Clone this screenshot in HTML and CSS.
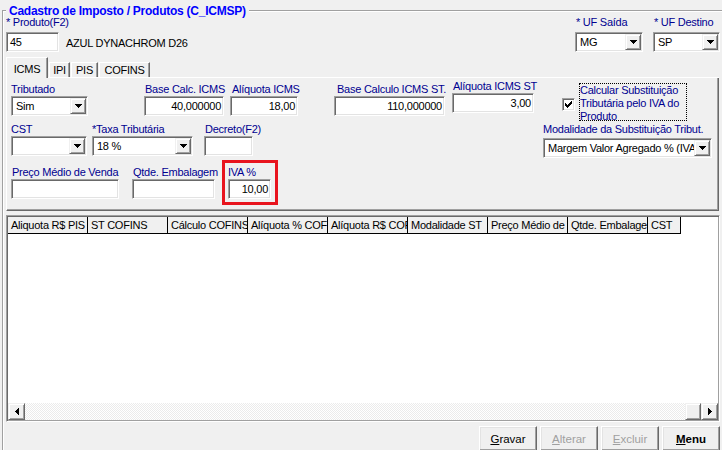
FILE: index.html
```html
<!DOCTYPE html>
<html lang="pt-BR">
<head>
<meta charset="utf-8">
<title>Cadastro de Imposto / Produtos</title>
<link rel="stylesheet" href="styles.css">
</head>
<body>
<fieldset class="group">
  <legend class="group-title">Cadastro de Imposto / Produtos (C_ICMSP)</legend>

  <div class="top-row">
    <div class="field">
      <div class="lbl">* Produto(F2)</div>
      <div class="prod-line">
        <div class="txt w-prod">45</div>
        <div class="prod-name">AZUL DYNACHROM D26</div>
      </div>
    </div>
    <div class="uf-group">
      <div class="field f-uf1">
        <div class="lbl lbl-in1">* UF Saída</div>
        <div class="select"><span class="val">MG</span><span class="dd"><svg width="7" height="4" viewBox="0 0 7 4"><path d="M0 0h7v1H0zM1 1h5v1H1zM2 2h3v1H2zM3 3h1v1H3z"/></svg></span></div>
      </div>
      <div class="field f-uf2">
        <div class="lbl lbl-in1">* UF Destino</div>
        <div class="select"><span class="val">SP</span><span class="dd"><svg width="7" height="4" viewBox="0 0 7 4"><path d="M0 0h7v1H0zM1 1h5v1H1zM2 2h3v1H2zM3 3h1v1H3z"/></svg></span></div>
      </div>
    </div>
  </div>

  <div class="tabstrip">
    <div class="tab tab-active">ICMS</div>
    <div class="tab-rest">
      <div class="tab tab-ipi">IPI</div>
      <div class="tab tab-pis">PIS</div>
      <div class="tab tab-cofins">COFINS</div>
    </div>
  </div>

  <div class="panel">
    <div class="row row-a">
      <div class="field f-trib">
        <div class="lbl">Tributado</div>
        <div class="select"><span class="val">Sim</span><span class="dd"><svg width="7" height="4" viewBox="0 0 7 4"><path d="M0 0h7v1H0zM1 1h5v1H1zM2 2h3v1H2zM3 3h1v1H3z"/></svg></span></div>
      </div>
      <div class="field f-bcalc">
        <div class="lbl lbl-in1">Base Calc. ICMS</div>
        <div class="txt num">40,000000</div>
      </div>
      <div class="field f-aliq">
        <div class="lbl lbl-in2">Alíquota ICMS</div>
        <div class="txt num">18,00</div>
      </div>
      <div class="field f-bcst">
        <div class="lbl lbl-in3">Base Calculo ICMS ST.</div>
        <div class="txt num">110,000000</div>
      </div>
      <div class="field f-aliqst">
        <div class="lbl lbl-in1">Alíquota ICMS ST</div>
        <div class="txt num">3,00</div>
      </div>
      <div class="chk"><svg width="7" height="7" viewBox="0 0 7 7"><path d="M6 0h1v3H6zM5 1h1v3H5zM4 2h1v3H4zM3 3h1v3H3zM2 4h1v3H2zM1 3h1v3H1zM0 2h1v3H0z"/></svg></div>
      <div class="chk-label">Calcular Substituição<br>Tributária pelo IVA do<br>Produto</div>
    </div>

    <div class="row row-b">
      <div class="field f-cst">
        <div class="lbl">CST</div>
        <div class="select"><span class="val"></span><span class="dd"><svg width="7" height="4" viewBox="0 0 7 4"><path d="M0 0h7v1H0zM1 1h5v1H1zM2 2h3v1H2zM3 3h1v1H3z"/></svg></span></div>
      </div>
      <div class="field f-taxa">
        <div class="lbl">*Taxa Tributária</div>
        <div class="select"><span class="val">18 %</span><span class="dd"><svg width="7" height="4" viewBox="0 0 7 4"><path d="M0 0h7v1H0zM1 1h5v1H1zM2 2h3v1H2zM3 3h1v1H3z"/></svg></span></div>
      </div>
      <div class="field f-decreto">
        <div class="lbl lbl-in1">Decreto(F2)</div>
        <div class="txt"></div>
      </div>
      <div class="field f-modal">
        <div class="lbl">Modalidade da Substituição Tribut.</div>
        <div class="select"><span class="val">Margem Valor Agregado % (IVA)</span><span class="dd"><svg width="7" height="4" viewBox="0 0 7 4"><path d="M0 0h7v1H0zM1 1h5v1H1zM2 2h3v1H2zM3 3h1v1H3z"/></svg></span></div>
      </div>
    </div>

    <div class="row row-c">
      <div class="field f-preco">
        <div class="lbl lbl-in1">Preço Médio de Venda</div>
        <div class="txt"></div>
      </div>
      <div class="field f-qtde">
        <div class="lbl lbl-in1">Qtde. Embalagem</div>
        <div class="txt"></div>
      </div>
      <div class="iva-box">
        <div class="field f-iva">
          <div class="lbl">IVA %</div>
          <div class="txt num">10,00</div>
        </div>
      </div>
    </div>
  </div>

  <div class="grid">
    <div class="grid-head">
      <div class="gh-cell">Aliquota R$ PIS</div>
      <div class="gh-cell">ST COFINS</div>
      <div class="gh-cell">Cálculo COFINS</div>
      <div class="gh-cell">Alíquota % COFINS</div>
      <div class="gh-cell">Alíquota R$ COFINS</div>
      <div class="gh-cell">Modalidade ST</div>
      <div class="gh-cell">Preço Médio de Venda</div>
      <div class="gh-cell">Qtde. Embalagem</div>
      <div class="gh-cell gh-last">CST</div>
    </div>
    <div class="grid-body"></div>
    <div class="hscroll">
      <div class="sb-btn"><svg width="4" height="7" viewBox="0 0 4 7"><path d="M3 0h1v7H3zM2 1h1v5H2zM1 2h1v3H1zM0 3h1v1H0z"/></svg></div>
      <div class="sb-track"><div class="sb-thumb"></div></div>
      <div class="sb-btn"><svg width="4" height="7" viewBox="0 0 4 7"><path d="M0 0h1v7H0zM1 1h1v5H1zM2 2h1v3H2zM3 3h1v1H3z"/></svg></div>
    </div>
  </div>

  <div class="actions">
    <div class="btn"><span><u>G</u>ravar</span></div>
    <div class="btn btn-disabled"><span><u>A</u>lterar</span></div>
    <div class="btn btn-disabled"><span><u>E</u>xcluir</span></div>
    <div class="btn btn-bold"><span><u>M</u>enu</span></div>
  </div>
</fieldset>
</body>
</html>
```
FILE: styles.css
```css
* { box-sizing: border-box; }
html, body { margin: 0; padding: 0; }
body {
  width: 722px;
  height: 450px;
  overflow: hidden;
  background: #f0f0f0;
  font-family: "Liberation Sans", Arial, sans-serif;
  font-size: 11px;
  letter-spacing: -0.25px;
  color: #000;
}

/* group box (its right and bottom edges lie outside the window) */
.group {
  width: 720px;
  height: 447px;
  min-width: 0;
  margin: 3px 0 0 2px;
  padding: 0 2px 0 3px;
  border: 1px solid #a0a0a0;
  border-right: 0;
  border-bottom: 0;
  box-shadow: inset 1px 1px 0 #fff;
}
.group-title {
  margin: 0;
  padding: 2px 3px 0;
  font-size: 12px;
  line-height: 12px;
  font-weight: bold;
  letter-spacing: -0.25px;
  color: #0000ff;
  background: #f0f0f0;
}

.field { display: flex; flex-direction: column; flex: none; }
.lbl {
  height: 13px;
  line-height: 13px;
  color: #000090;
  white-space: nowrap;
}
.lbl-in1 { padding-left: 1px; }
.lbl-in2 { padding-left: 2px; }
.lbl-in3 { padding-left: 3px; }

/* text box */
.txt {
  height: 20px;
  background: #fff;
  border: 1px solid;
  border-color: #a0a0a0 #fff #fff #a0a0a0;
  box-shadow: inset 1px 1px 0 #696969, inset -1px -1px 0 #e3e3e3;
  padding: 0 2px 0 3px;
  line-height: 18px;
  white-space: nowrap;
  overflow: hidden;
}
.num { text-align: right; }

/* combo box */
.select {
  display: flex;
  height: 20px;
  background: #fff;
  border: 1px solid;
  border-color: #a0a0a0 #fff #fff #a0a0a0;
  box-shadow: inset 1px 1px 0 #696969, inset -1px -1px 0 #e3e3e3;
  padding: 1px;
}
.select .val {
  flex: 1;
  min-width: 0;
  padding-left: 3px;
  line-height: 16px;
  white-space: nowrap;
  overflow: hidden;
}
.dd, .sb-btn {
  flex: none;
  display: flex;
  align-items: center;
  justify-content: center;
  background: #f0f0f0;
  border: 1px solid;
  border-color: #f0f0f0 #696969 #696969 #f0f0f0;
  box-shadow: inset 1px 1px 0 #fff, inset -1px -1px 0 #a0a0a0;
}
.dd { width: 16px; height: 16px; }
.dd svg, .sb-btn svg, .chk svg { display: block; }

/* top row */
.top-row {
  display: flex;
  justify-content: space-between;
  margin-top: -1px;
}
.prod-line { display: flex; margin-top: 3px; }
.w-prod { width: 53px; }
.prod-name { margin-left: 7px; padding-top: 5px; line-height: 13px; white-space: nowrap; }
.uf-group { display: flex; gap: 10px; }
.uf-group .select { margin-top: 3px; }
.f-uf1 { width: 68px; }
.f-uf2 { width: 67px; }

/* tabs */
.tabstrip {
  display: flex;
  height: 21px;
  margin-top: 5px;
  margin-right: 1px;
}
.tab {
  text-align: center;
  line-height: 13px;
  white-space: nowrap;
  background: #f0f0f0;
  border-style: solid;
  border-width: 1px 1px 0 1px;
  border-color: #fff #696969 transparent #fff;
  box-shadow: inset -1px 0 0 #a0a0a0;
}
.tab-active { width: 42px; height: 21px; padding-top: 5px; }
.tab-rest {
  flex: 1;
  display: flex;
  align-items: flex-end;
  border-bottom: 1px solid #fff;
}
.tab-rest .tab { height: 15px; margin-left: 1px; padding-top: 1px; }
.tab-ipi { width: 21px; }
.tab-pis { width: 27px; }
.tab-cofins { width: 51px; }

/* tab sheet */
.panel {
  margin-right: 1px;
  border-style: solid;
  border-width: 0 1px 1px 1px;
  border-color: #fff #696969 #696969 #fff;
  box-shadow: inset -1px -1px 0 #a0a0a0;
  padding: 5px 6px 5px 4px;
}
.row { display: flex; align-items: flex-start; }
.row-b { margin-top: 2px; }
.row-c { margin-top: 2px; }

.f-trib { width: 77px; }
.f-bcalc { width: 80px; margin-left: 56px; }
.f-aliq { width: 68px; margin-left: 6px; }
.f-bcst { width: 111px; margin-left: 36px; }
.f-aliqst { width: 82px; margin-left: 7px; margin-top: -3px; }

.chk {
  width: 13px;
  height: 13px;
  flex: none;
  margin-left: 28px;
  margin-top: 15px;
  display: flex;
  align-items: center;
  justify-content: center;
  background: #fff;
  border: 1px solid;
  border-color: #a0a0a0 #fff #fff #a0a0a0;
  box-shadow: inset 1px 1px 0 #696969, inset -1px -1px 0 #e3e3e3;
}
.chk-label {
  width: 108px;
  height: 38px;
  flex: none;
  margin-left: 4px;
  border: 1px dotted #000;
  line-height: 13px;
  color: #000090;
  white-space: nowrap;
}

.f-cst { width: 76px; }
.f-taxa { width: 101px; margin-left: 5px; }
.f-decreto { width: 49px; margin-left: 11px; }
.f-modal { width: 169px; margin-left: auto; }
.f-modal .select { margin-top: 2px; }

.f-preco { width: 108px; margin-top: 6px; }
.f-qtde { width: 83px; margin-left: 13px; margin-top: 6px; }
.iva-box {
  flex: none;
  margin-left: 7px;
  border: 3px solid #e8141e;
  padding: 3px 4px 3px 3px;
}
.f-iva { width: 43px; }

/* grid */
.grid {
  height: 207px;
  margin-top: 4px;
  display: flex;
  flex-direction: column;
  background: #fff;
  border: 1px solid;
  border-color: #a0a0a0 #fff #fff #a0a0a0;
  box-shadow: inset 1px 1px 0 #696969, inset -1px -1px 0 #a0a0a0;
  padding: 1px;
}
.grid-head { display: flex; height: 17px; flex: none; }
.gh-cell {
  width: 80px;
  flex: none;
  border-right: 1px solid #000;
  border-bottom: 1px solid #000;
  background: #f0f0f0;
  padding-left: 3px;
  line-height: 16px;
  white-space: nowrap;
  overflow: hidden;
}
.gh-last { width: 33px; }
.grid-body { flex: 1; }
.hscroll { display: flex; height: 17px; flex: none; }
.sb-btn { width: 17px; height: 17px; }
.sb-track {
  flex: 1;
  display: flex;
  justify-content: flex-end;
  background: repeating-conic-gradient(#fff 0 25%, #ebebeb 0 50%) 0 0 / 2px 2px;
}
.sb-thumb {
  width: 16px;
  background: #f0f0f0;
  border: 1px solid;
  border-color: #f0f0f0 #696969 #696969 #f0f0f0;
  box-shadow: inset 1px 1px 0 #fff, inset -1px -1px 0 #a0a0a0;
}

/* buttons */
.actions {
  display: flex;
  justify-content: flex-end;
  gap: 3px;
  margin-top: 4px;
}
.btn {
  width: 58px;
  height: 25px;
  display: flex;
  align-items: center;
  justify-content: center;
  font-size: 11.5px;
  letter-spacing: 0;
  background: #f0f0f0;
  border: 1px solid;
  border-color: #fff #696969 #696969 #fff;
  box-shadow: inset -1px -1px 0 #a0a0a0, inset 1px 1px 0 #e3e3e3;
}
.btn-disabled { color: #a0a0a0; }
.btn-bold { font-weight: bold; }
```
